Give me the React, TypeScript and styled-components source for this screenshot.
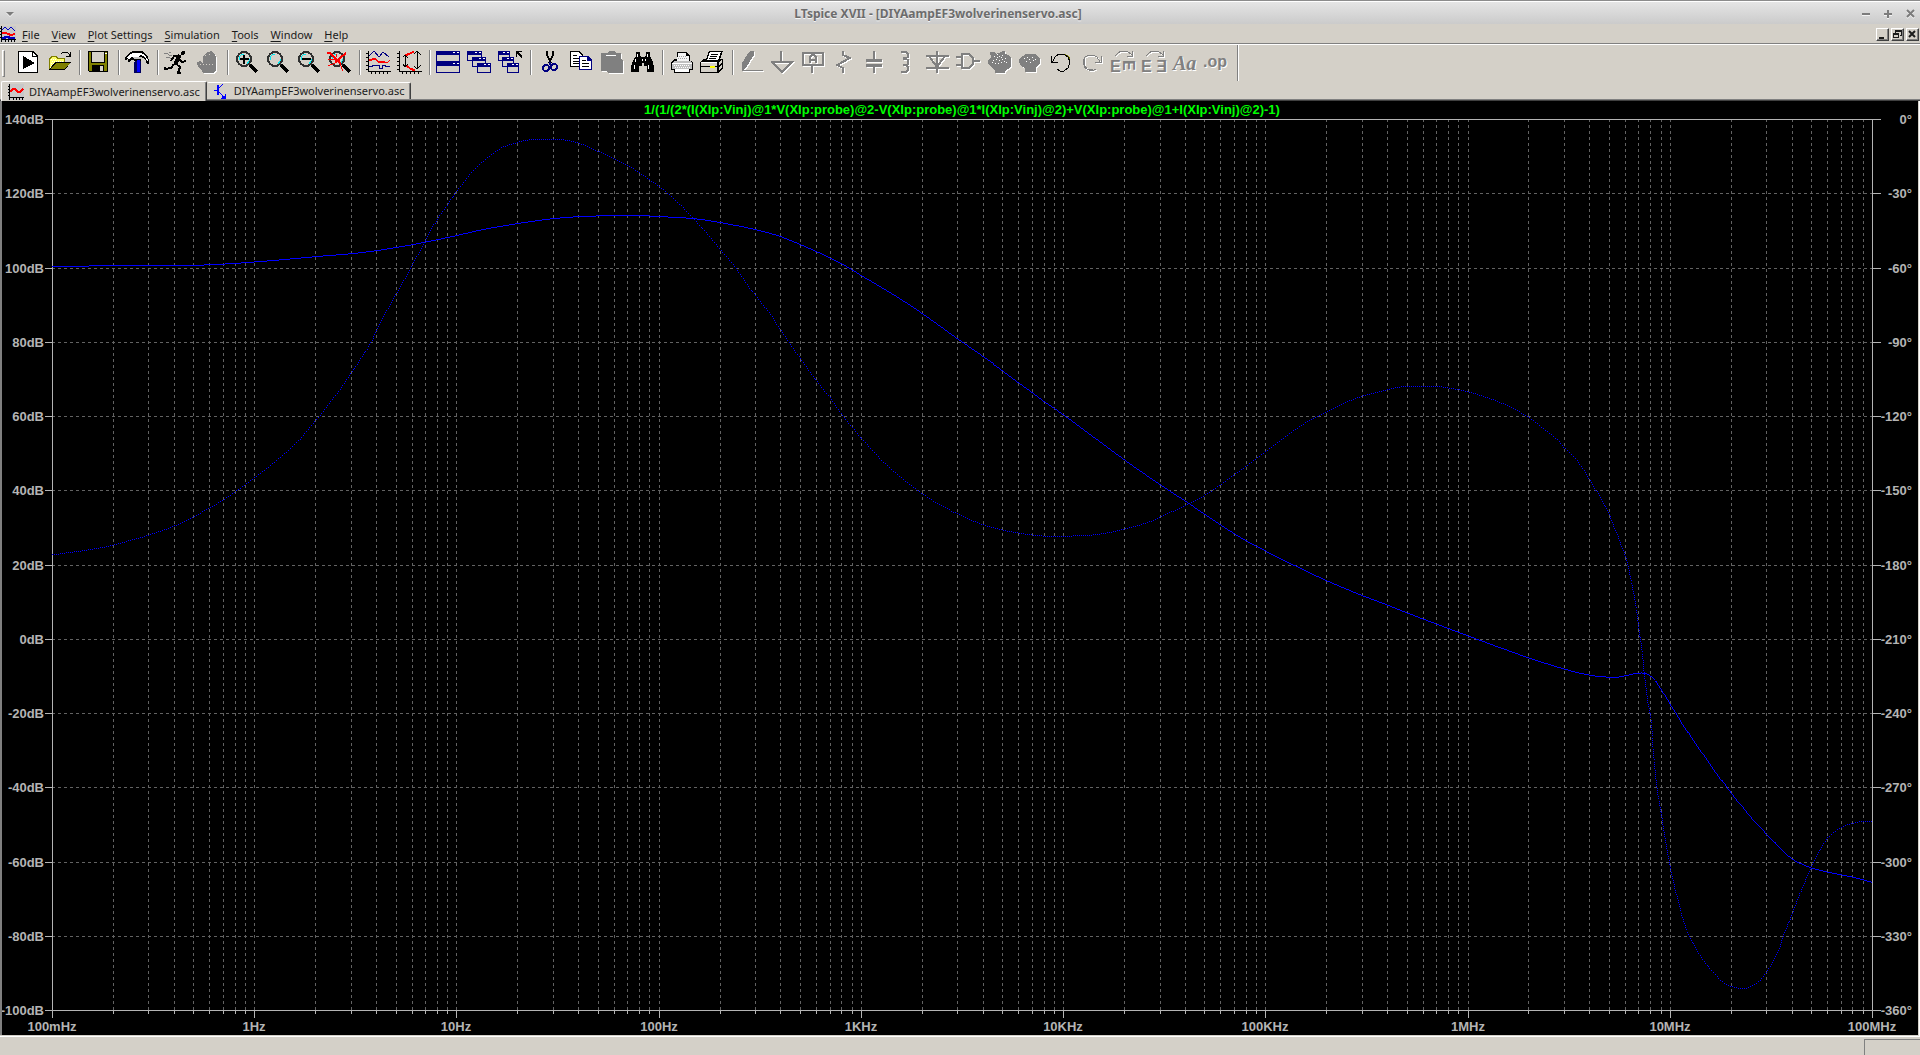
import React, { useLayoutEffect, useMemo, useRef, useState } from "react";
import styled, { createGlobalStyle } from "styled-components";

const FACE = "#d4d0c8";
const SHADOW = "#808080";
const DARK = "#404040";
const NAVY = "#000080";
const OLIVE = "#808000";
const AXIS = "#b4b4b4";
const GRID = "#626262";
const TRACE = "#0000ff";

const UI_FONT = `"Noto Sans", "Open Sans", sans-serif`;
const PLOT_FONT = `"Liberation Sans", Arial, sans-serif`;

const GlobalStyle = createGlobalStyle`
  * { box-sizing: border-box; }
  body { margin: 0; background: ${FACE}; overflow: hidden; }
  button { font: inherit; color: inherit; }
`;

const Window = styled.div`
  display: flex;
  flex-direction: column;
  height: 100vh;
  background: ${FACE};
  color: #1c1c1c;
  font: 11px/16px ${UI_FONT};
`;

const TitleBar = styled.header`
  display: grid;
  grid-template-columns: 56px 1fr 100px;
  align-items: center;
  height: 24px;
  flex: none;
  border-top: 1px solid #8c8c8c;
  box-shadow: inset 0 1px #ffffff;
  background: linear-gradient(#e6e6e6, #cbcbcb);
`;

const TitleText = styled.h1`
  margin: 0;
  padding-top: 2px;
  text-align: center;
  font-size: 12px;
  line-height: 20px;
  font-weight: 700;
  color: #6c6c6c;
  text-shadow: 0 1px #f4f4f4;
  white-space: nowrap;
`;

const FrameButtons = styled.div<{ $end?: boolean }>`
  display: flex;
  justify-content: ${(p) => (p.$end ? "flex-end" : "flex-start")};
  gap: 10px;
  padding: 2px 4px 0 4px;
`;

const FrameButton = styled.button`
  width: 12px;
  height: 12px;
  padding: 0;
  border: 0;
  background: none;
  color: #7c7c7c;
  svg { display: block; filter: drop-shadow(0 1px #f4f4f4); }
`;

const MenuBar = styled.nav`
  display: flex;
  align-items: center;
  height: 21px;
  flex: none;
  padding-right: 1px;
  border-bottom: 1px solid #ffffff;
  box-shadow: inset 0 -1px ${SHADOW};
`;

const MenuItem = styled.button`
  padding: 1px 0 0;
  margin: 0 6px;
  border: 0;
  background: none;
  line-height: 18px;
  u { text-underline-offset: 2px; }
`;

const MdiButtons = styled.div`
  display: flex;
  gap: 2px;
  margin-left: auto;
`;

const MdiButton = styled.button`
  width: 13px;
  height: 13px;
  padding: 0;
  border: 1px solid;
  border-color: #ffffff ${DARK} ${DARK} #ffffff;
  box-shadow: inset -1px -1px ${SHADOW};
  background: ${FACE};
  svg { display: block; }
`;

const ToolBar = styled.div`
  display: flex;
  width: max-content;
  height: 36px;
  flex: none;
  padding: 5px 6px 0 2px;
  border-right: 1px solid #ffffff;
  box-shadow: inset -1px 0 ${SHADOW};
`;

const Grip = styled.div`
  width: 3px;
  height: 27px;
  margin-right: 8px;
  border: 1px solid;
  border-color: #ffffff ${SHADOW} ${SHADOW} #ffffff;
`;

const ToolButton = styled.button`
  width: 31px;
  height: 26px;
  padding: 1px 3px;
  border: 0;
  background: none;
  svg { display: block; overflow: visible; }
`;

const Separator = styled.div`
  width: 2px;
  height: 25px;
  margin: 0 2px 0 4px;
  background: linear-gradient(90deg, ${SHADOW} 1px, #ffffff 1px);
`;

const TabBar = styled.div`
  display: flex;
  align-items: flex-end;
  height: 20px;
  flex: none;
  padding-left: 1px;
  background: linear-gradient(${SHADOW}, ${SHADOW}) 0 18px / 100% 1px no-repeat,
    linear-gradient(${DARK}, ${DARK}) 0 19px / 100% 1px no-repeat;
`;

const Tab = styled.button<{ $active?: boolean }>`
  display: flex;
  align-items: center;
  gap: 5px;
  height: ${(p) => (p.$active ? 20 : 17)}px;
  margin-bottom: ${(p) => (p.$active ? 0 : 2)}px;
  padding: 0 6px;
  border: 0;
  border-top: 1px solid #ffffff;
  border-left: 1px solid ${(p) => (p.$active ? "#ffffff" : FACE)};
  border-right: 1px solid ${DARK};
  border-radius: 2px 2px 0 0;
  box-shadow: inset -1px 0 ${SHADOW};
  background: ${FACE};
  line-height: 16px;
`;

const PlotPane = styled.main`
  flex: 1;
  min-height: 0;
  border-left: 2px solid;
  border-image: linear-gradient(90deg, ${SHADOW} 50%, ${DARK} 50%) 2;
  background: #000000;
  position: relative;
  overflow: hidden;
`;

const PaneRow = styled.div`
  display: flex;
  flex: 1;
  min-height: 0;
  border-right: 1px solid #ffffff;
  border-bottom: 1px solid #ffffff;
  padding: 0 1px 1px 0;
`;

const PlotSvg = styled.svg`
  position: absolute;
  inset: 0;
  width: 100%;
  height: 100%;
  font: 700 13px ${PLOT_FONT};
`;

const StatusBar = styled.footer`
  display: flex;
  justify-content: flex-end;
  align-items: flex-end;
  height: 18px;
  flex: none;
`;

const StatusCell = styled.output`
  display: block;
  width: 56px;
  height: 16px;
  border-top: 1px solid ${SHADOW};
  border-left: 1px solid ${SHADOW};
`;

/* ---------- toolbar drawings, 25 x 24 grid ---------- */

type Kids = { children?: React.ReactNode };

const Art = ({ children }: Kids) => (
  <svg width="25" height="24" viewBox="0 0 25 24" fill="none" shapeRendering="crispEdges" aria-hidden="true">
    {children}
  </svg>
);

/* Disabled look: a white copy one pixel down and right, grey on top. */
const Engraved = ({ children }: Kids) => (
  <Art>
    <g transform="translate(1 1)" color="#ffffff">{children}</g>
    <g color={SHADOW}>{children}</g>
  </Art>
);

const Lens = ({ children }: Kids) => (
  <Art>
    <path d="M16 14l7 7" stroke="#000" strokeWidth="4" />
    <circle cx="10" cy="8" r="7" stroke="#303030" strokeWidth="2" />
    <path d="M5 9V6l3-3h2M15 8v2l-2 3" stroke="#00e8f0" />
    {children}
  </Art>
);

const AxesArt = () => (
  <path d="M2 0h1v20h22v1H2zM0 2h2v1H0zM0 6h2v1H0zM0 10h2v1H0zM0 14h2v1H0zM0 18h2v1H0zM5 21h1v2H5zM9 21h1v2H9zM13 21h1v2h-1zM17 21h1v2h-1zM21 21h1v2h-1z" fill="#000" />
);

const MiniWindow = ({ x, y, w, h }: { x: number; y: number; w: number; h: number }) => (
  <g>
    <rect x={x} y={y} width={w} height={h} fill={NAVY} />
    <rect x={x + 1} y={y + 4} width={w - 2} height={h - 5} fill={FACE} />
    <rect x={x + w - 3} y={y + 1} width="2" height="1" fill="#fff" />
    <rect x={x + w - 7} y={y + 1} width="2" height="1" fill="#fff" />
  </g>
);

const Pixels = ({ at, fill }: { at: number[][]; fill: string }) => (
  <path d={at.map(([x, y]) => `M${x} ${y}h1v1h-1z`).join("")} fill={fill} />
);

const icons: Record<string, React.ReactNode> = {
  run: (
    <Art>
      <path d="M2 0h15l5 5v17H2z" fill="#000" />
      <path d="M3 1h13v5h5v15H3z" fill="#fff" />
      <path d="M17 2l3 3h-3z" fill="#fff" />
      <path d="M7 5v13l12-6z" fill="#000" />
    </Art>
  ),
  open: (
    <Art>
      <path d="M2 19V7l2-2h5l2 2h7v5H8z" fill={OLIVE} />
      <path d="M3 17V8l2-2h3l2 2h7v3H8z" fill="#ffff66" />
      <Pixels fill="#fff" at={[[4, 8], [6, 8], [8, 8], [5, 10], [7, 10], [9, 10], [11, 10], [13, 10], [15, 10], [4, 12], [6, 12], [4, 14], [3, 16]]} />
      <path d="M2 19h16l6-8H8z" fill="#000" />
      <path d="M4 18h14l5-6H9z" fill={OLIVE} />
      <path d="M14 3l2-2h4l2 2v3M19 5h4V1" stroke="#000" />
    </Art>
  ),
  save: (
    <Art>
      <path d="M2 0h20v21H3l-1-1z" fill="#000" />
      <path d="M3 1h18v19H3z" fill={OLIVE} />
      <path d="M5 0h14v12H5z" fill="#000" />
      <path d="M6 1h12v10H6z" fill={FACE} />
      <path d="M19 2h2v1h-2z" fill="#fff" />
      <path d="M6 14h12v7H6z" fill="#000" />
      <path d="M14 15h3v5h-3z" fill={FACE} />
    </Art>
  ),
  hammer: (
    <Art>
      <path d="M0 9V6l4-4 4-2h9l4 3 2 3 1 3v4h-2l-2-5-4-2v4H9V9H6l-2 2H3V8z" fill="#000" />
      <path d="M2 7l3-4 3-1h8l4 2 3 5v2l-3-5-4-2-2 1v3h-4V6H6L4 9z" fill="#fff" />
      <path d="M8 6h8v2H9z" fill="#c0c0c0" />
      <path d="M10 10h6v12H9V12z" fill="#000060" />
      <path d="M12 9h3v12h-3z" fill="#0000ff" />
    </Art>
  ),
  runner: (
    <Art>
      <circle cx="19" cy="2" r="2" fill="#000" />
      <path d="M16 4l-5 9" stroke="#000" strokeWidth="4" />
      <path d="M16 5H10l-3 5M15 8l3 3 4-1M11 12l5 4-2 6h3M10 13l-3 4-6 1v-2" stroke="#000" strokeWidth="2" />
      <path d="M0 2h3l2 2h3M2 6h3l2 2M5 1l2 1" stroke={SHADOW} />
    </Art>
  ),
  halt: (
    <Engraved>
      <path d="M10 3l3-2 3-1 2 2 2 1 1 3v13l-2 3H8l-1-3-4-3-1-5 3-1 3 2V5z" fill="currentColor" />
      <Pixels fill={FACE} at={[[5, 13], [8, 13], [11, 13], [14, 13], [17, 13], [10, 4], [14, 3]]} />
    </Engraved>
  ),
  zoomIn: (
    <Lens>
      <path d="M6 7h9v2H6zM9 4h2v9H9z" fill="#000" />
    </Lens>
  ),
  zoomPan: <Lens />,
  zoomOut: (
    <Lens>
      <path d="M6 7h9v2H6z" fill="#000" />
    </Lens>
  ),
  zoomFit: (
    <Lens>
      <path d="M0 2h3l6 6 5 5M19 2l-5 4-6 6M8 10h5" stroke="#ff0000" strokeWidth="2" />
      <path d="M13 13l3 7M8 12l-7 3M1 8l7 1M9 3v3M17 5l2-4" stroke="#ff0000" />
    </Lens>
  ),
  plotPane: (
    <Art>
      <AxesArt />
      <path d="M3 5l5-5 5 6 4-5 6 5" stroke={NAVY} />
      <path d="M3 9l6-2 4 4 4-1 4 2 3-3" stroke="#ff0000" />
      <path d="M3 10l6-2 4 4 4-1 3 1" stroke="#ff0000" />
      <path d="M3 15h3v-1h7v3h3v-3h3v1h5" stroke={NAVY} />
    </Art>
  ),
  autorange: (
    <Art>
      <AxesArt />
      <path d="M8 4l5-2 4-2M8 13l5 4 5 2" stroke="#ff0000" />
      <path d="M8 5l5-2 4-2M8 14l5 4 5 2" stroke="#ff0000" />
      <path d="M8 4v11M6 6l2-2 3 3M6 13l2 3 3-3M20 0v18M17 3l3-3 4 4M17 15l3 3 4-4" stroke="#000" />
    </Art>
  ),
  tile: (
    <Art>
      <MiniWindow x={0} y={0} w={24} h={11} />
      <MiniWindow x={0} y={11} w={24} h={11} />
    </Art>
  ),
  cascade: (
    <Art>
      <MiniWindow x={0} y={0} w={15} h={10} />
      <MiniWindow x={5} y={6} w={14} h={10} />
      <MiniWindow x={10} y={12} w={14} h={10} />
    </Art>
  ),
  closeAll: (
    <Art>
      <MiniWindow x={0} y={0} w={12} h={10} />
      <MiniWindow x={4} y={6} w={12} h={10} />
      <MiniWindow x={9} y={12} w={12} h={10} />
      <path d="M18 6V0h6v1h-4l4 4v2h-1l-4-4v3z" fill="#000" />
    </Art>
  ),
  cut: (
    <Art>
      <path d="M10 0v4l4 8M16 0v4l-4 8" stroke="#000" strokeWidth="2" />
      <circle cx="9" cy="17" r="3" stroke={NAVY} strokeWidth="2" />
      <circle cx="17" cy="16" r="3" stroke={NAVY} strokeWidth="2" />
      <path d="M12 11h2v3h-2z" fill={NAVY} />
    </Art>
  ),
  copy: (
    <Art>
      <path d="M2 0h9l4 4v12H2z" fill="#000" />
      <path d="M3 1h7l4 4v10H3z" fill="#fff" />
      <path d="M5 4h4v1H5zM5 7h7v1H5zM5 10h7v1H5zM5 12h7v1H5z" fill="#000" />
      <path d="M11 5h9l4 4v10H11z" fill={NAVY} />
      <path d="M12 6h7v4h4v8H12z" fill="#fff" />
      <path d="M14 9h4v1h-4zM14 12h7v1h-7zM14 15h7v1h-7z" fill="#000" />
    </Art>
  ),
  paste: (
    <Engraved>
      <path d="M2 2h6l2-2h5l2 2h5v6l2 2v12H9l-2-2H2z" fill="currentColor" />
      <path d="M7 4h10v1H7z" fill="#fff" />
    </Engraved>
  ),
  find: (
    <Art>
      <path d="M6 1h4v4l2 1h2l2-1V1h4v4l3 6 1 5v5h-7v-6h-3v-3h-2v3h-3v6H1v-5l2-6 3-5z" fill="#000" />
      <path d="M7 3h1v3H7zM17 3h1v3h-1zM5 8h1v3H5zM4 14h1v4H4zM15 8h1v2h-1zM18 14h1v4h-1zM12 8h1v2h-1z" fill="#fff" />
    </Art>
  ),
  print: (
    <Art>
      <path d="M8 1h10l3 4v5h1l2 2v7h-3v3H5v-3H2v-8l3-3h3z" fill="#000" />
      <path d="M9 2h8v3h3v5H8z" fill="#f4f4f4" />
      <path d="M3 12l3-2h15l2 2v6H3z" fill="#c0c0c0" />
      <path d="M3 12h20v1H3zM6 18h14v3H6z" fill="#fff" />
      <path d="M5 14h16M6 16h16" stroke="#fff" strokeDasharray="1 1" />
      <path d="M10 5h8M9 7h10" stroke="#a0a0a0" strokeDasharray="1 1" />
    </Art>
  ),
  printSetup: (
    <Art>
      <path d="M9 0h14l-3 8h3v9l-5 5H0V11l4-3h2z" fill="#000" />
      <path d="M10 1h11l-3 8H7z" fill="#fff" />
      <path d="M11 3h7M10 5h7M9 7h7" stroke="#000" />
      <path d="M1 12h16v3H1zM1 16h16v5H1z" fill={FACE} />
      <path d="M19 11l3-2v2l-3 3zM19 16l3-3v3l-3 4z" fill={FACE} />
      <path d="M1 11h16v1H1z" fill="#fff" />
      <path d="M10 15h5v2h-5z" fill="#ffff00" />
    </Art>
  ),
  wire: (
    <Engraved>
      <path d="M10 1l2-1h3v4l-7 11-4 4H3v-7z" fill="currentColor" />
      <path d="M3 19h21v1H3z" fill="currentColor" />
    </Engraved>
  ),
  ground: (
    <Engraved>
      <path d="M11 0v10M1 11h21L12 21 2 11" stroke="currentColor" strokeWidth="2" />
    </Engraved>
  ),
  label: (
    <Engraved>
      <path d="M2 2h20v12H2zM11 14v8" stroke="currentColor" strokeWidth="2" />
      <path d="M9 12V6l2-2h2l2 2v6M9 9h6" stroke="currentColor" strokeWidth="2" />
    </Engraved>
  ),
  resistor: (
    <Engraved>
      <path d="M11 0v4l7 3-13 7 6 3v5" stroke="currentColor" strokeWidth="2" />
    </Engraved>
  ),
  capacitor: (
    <Engraved>
      <path d="M11 0v9M11 15v7" stroke="currentColor" strokeWidth="2" />
      <path d="M3 8h16v3H3zM3 13h16v3H3z" fill="currentColor" />
    </Engraved>
  ),
  inductor: (
    <Engraved>
      <path d="M7 1h5l2 2v3l-2 1H9M9 8h3l2 1v4l-2 1H9M9 14h3l2 2v3l-2 2H7" stroke="currentColor" strokeWidth="2" />
    </Engraved>
  ),
  diode: (
    <Engraved>
      <path d="M12 0v22M1 5h23M4 5l8 11 8-11M1 17h23" stroke="currentColor" strokeWidth="2" />
    </Engraved>
  ),
  component: (
    <Engraved>
      <path d="M6 3h7l4 4v6l-4 4H6zM0 6h6M0 14h6M17 10h7" stroke="currentColor" strokeWidth="2" />
    </Engraved>
  ),
  move: (
    <Engraved>
      <path d="M3 1h4l2 2 5-2 2-1h2v3l4 1 2 3v8l-3 3-3 2v2H8v-3l-4-3-3-4V9l3-2z" fill="currentColor" />
      <Pixels fill="#ffffff" at={[[7, 5], [10, 3], [12, 5], [15, 4], [18, 7], [6, 9], [9, 8], [12, 9], [15, 8], [8, 12], [11, 12], [19, 11], [10, 6], [14, 6], [17, 10], [5, 11], [14, 11]]} />
    </Engraved>
  ),
  drag: (
    <Engraved>
      <path d="M5 5l3-2h9l3 2 2 3v4l-4 4v5H7v-4l-4-2-2-4V8z" fill="currentColor" />
      <Pixels fill="#ffffff" at={[[6, 7], [9, 6], [11, 8], [14, 6], [17, 8], [8, 10], [12, 11], [15, 9]]} />
    </Engraved>
  ),
  undo: (
    <Art>
      <path d="M7 5l4-2h5l4 3 1 3" stroke={OLIVE} />
      <path d="M3 12l3-6 4-3h5l4 3 2 5-2 6-4 3h-4l-3-2" stroke="#000" />
      <path d="M2 5v7h7v-1H5l-2-1V5z" fill="#000" />
    </Art>
  ),
  redo: (
    <Engraved>
      <path d="M20 11l-3-5-4-2H9L5 6l-2 5 2 6 4 2h5l2-1M21 5v6h-6" stroke="currentColor" />
      <path d="M4 8v6l3 4h6" stroke="currentColor" />
    </Engraved>
  ),
  rotate: (
    <Engraved>
      <path d="M4 5l3-3 3-2h6l5 4M16 5h5V0" stroke="currentColor" />
      <text x="-1" y="21" fill="currentColor" fontFamily={PLOT_FONT} fontWeight="700" fontSize="16">E</text>
      <text x="-1" y="0" transform="translate(12 10) rotate(90)" fill="currentColor" fontFamily={PLOT_FONT} fontWeight="700" fontSize="16">E</text>
    </Engraved>
  ),
  mirror: (
    <Engraved>
      <path d="M4 5l3-3 3-2h6l5 4M16 5h5V0" stroke="currentColor" />
      <text x="-1" y="21" fill="currentColor" fontFamily={PLOT_FONT} fontWeight="700" fontSize="16">E</text>
      <text x="-1" y="21" transform="translate(24 0) scale(-1 1)" fill="currentColor" fontFamily={PLOT_FONT} fontWeight="700" fontSize="16">E</text>
    </Engraved>
  ),
  text: (
    <Engraved>
      <text x="0" y="19" fill="currentColor" fontFamily={`"Liberation Serif", serif`} fontStyle="italic" fontWeight="700" fontSize="20">Aa</text>
    </Engraved>
  ),
  directive: (
    <Engraved>
      <text x="-1" y="16" fill="currentColor" fontFamily={PLOT_FONT} fontWeight="700" fontSize="16">.op</text>
    </Engraved>
  ),
};

const toolGroups: [string, string, boolean?][][] = [
  [["run", "New Schematic"], ["open", "Open"]],
  [["save", "Save"]],
  [["hammer", "Control Panel"]],
  [["runner", "Run"], ["halt", "Halt", true]],
  [["zoomIn", "Zoom to rectangle"], ["zoomPan", "Pan"], ["zoomOut", "Zoom back"], ["zoomFit", "Zoom full extents"]],
  [["plotPane", "Pick visible traces"], ["autorange", "Autorange"]],
  [["tile", "Tile windows"], ["cascade", "Cascade windows"], ["closeAll", "Close all windows"]],
  [["cut", "Cut"], ["copy", "Copy"], ["paste", "Paste", true], ["find", "Find"]],
  [["print", "Print"], ["printSetup", "Print Setup"]],
  [
    ["wire", "Wire", true], ["ground", "Ground", true], ["label", "Label Net", true],
    ["resistor", "Resistor", true], ["capacitor", "Capacitor", true], ["inductor", "Inductor", true],
    ["diode", "Diode", true], ["component", "Component", true], ["move", "Move", true],
    ["drag", "Drag", true], ["undo", "Undo"], ["redo", "Redo", true], ["rotate", "Rotate", true],
    ["mirror", "Mirror", true], ["text", "Text", true], ["directive", "SPICE Directive", true],
  ],
];

const menus = ["File", "View", "Plot Settings", "Simulation", "Tools", "Window", "Help"];

const WaveIcon = ({ full }: { full?: boolean }) => (
  <svg width="16" height="16" viewBox="0 0 16 16" fill="none" shapeRendering="crispEdges" aria-hidden="true">
    <rect width="16" height="16" fill="#c8c8c8" />
    <path d="M1 0h1v13h14v1H2v2H1zM0 2h1v1H0zM0 5h1v1H0zM0 8h1v1H0zM0 11h1v1H0zM5 14h1v2H5zM8 14h1v2H8zM11 14h1v2h-1zM14 14h1v2h-1z" fill="#000" />
    {full ? (
      <>
        <path d="M2 4l3-3 3 3 3-3 4 4" stroke="#0000c0" />
        <path d="M2 7h4l2 1 3 1 4-1" stroke="#ff0000" strokeWidth="2" />
        <path d="M2 12h3v-1h4v1h6" stroke="#0000c0" strokeWidth="2" />
      </>
    ) : (
      <path d="M2 8l3-3h2l3 3h2l3-3" stroke="#ff0000" strokeWidth="2" />
    )}
  </svg>
);

const TransistorIcon = () => (
  <svg width="15" height="16" viewBox="0 0 15 16" fill="none" shapeRendering="crispEdges" aria-hidden="true">
    <path d="M0 7h4M5 5l4-4M5 9l6 6M7 15h4v-4" stroke="#0000ff" />
    <path d="M4 2v10M8 13l3 2" stroke="#0000ff" strokeWidth="2" />
  </svg>
);

/* ---------- waveform data ---------- */

type Pt = [number, number];

/* Samples were digitised in a 1820 x 890 plot whose corner is at (52, 119). */
const SAMPLE = { x: 52, y: 119, w: 1820, h: 890 };

const magnitude: Pt[] = [
  [52, 266], [113, 265], [176, 265], [212, 264], [245, 262], [282, 259], [315, 256], [351, 253], [376, 250],
  [412, 244], [437, 239], [456, 235], [482, 229], [517, 223], [553, 218], [580, 216], [612, 215], [640, 215],
  [660, 216], [693, 218], [720, 222], [755, 229], [780, 236], [816, 251], [841, 263], [861, 275], [893, 294],
  [922, 313], [957, 338], [983, 356], [1002, 370], [1018, 382], [1032, 392], [1044, 401], [1063, 414],
  [1124, 459], [1160, 484], [1186, 501], [1220, 524], [1246, 540], [1265, 550], [1293, 564], [1327, 580],
  [1363, 595], [1387, 604], [1407, 612], [1436, 623], [1468, 635], [1498, 646], [1529, 657], [1564, 668],
  [1589, 674], [1607, 676], [1617, 676], [1628, 674], [1638, 672], [1647, 673], [1655, 680], [1663, 692],
  [1671, 705], [1682, 723], [1697, 745], [1713, 768], [1731, 792], [1748, 813], [1767, 834], [1782, 849],
  [1792, 858], [1802, 863], [1812, 867], [1833, 872], [1853, 876], [1872, 881],
];

const phase: Pt[] = [
  [52, 554], [73, 551], [94, 548], [113, 544], [135, 538], [149, 534], [174, 525], [193, 516], [209, 507],
  [223, 499], [236, 490], [254, 477], [278, 458], [298, 440], [315, 420], [335, 395], [351, 372], [371, 341],
  [376, 329], [396, 293], [412, 264], [425, 239], [438, 217], [448, 203], [456, 191], [475, 168], [500, 148],
  [517, 142], [531, 139], [553, 139], [567, 140], [582, 144], [598, 151], [614, 158], [629, 166], [640, 173],
  [660, 187], [673, 198], [693, 218], [720, 249], [735, 267], [755, 295], [771, 315], [780, 329], [800, 358],
  [816, 380], [831, 399], [841, 413], [852, 427], [861, 438], [885, 463], [901, 477], [922, 493], [938, 503],
  [957, 513], [983, 524], [1002, 529], [1018, 532], [1042, 535], [1073, 535], [1101, 533], [1124, 528],
  [1146, 522], [1160, 516], [1186, 504], [1205, 494], [1224, 481], [1246, 465], [1265, 451], [1277, 442],
  [1293, 430], [1307, 421], [1327, 411], [1347, 401], [1363, 395], [1387, 389], [1403, 386], [1440, 386],
  [1453, 388], [1468, 391], [1487, 397], [1507, 405], [1529, 417], [1542, 427], [1557, 439], [1564, 447],
  [1577, 460], [1589, 479], [1600, 497], [1610, 517], [1618, 537], [1626, 559], [1631, 582], [1636, 608],
  [1639, 632], [1642, 653], [1644, 675], [1647, 698], [1651, 723], [1653, 753], [1657, 790], [1662, 820],
  [1666, 845], [1671, 872], [1677, 897], [1685, 925], [1697, 950], [1710, 968], [1723, 981], [1731, 985],
  [1740, 987], [1748, 986], [1758, 980], [1767, 969], [1777, 952], [1783, 934], [1792, 912], [1802, 886],
  [1812, 863], [1820, 847], [1828, 836], [1841, 826], [1853, 822], [1863, 820], [1872, 820],
];

/* Smooth interpolation, then one cell per device pixel, every `step`-th kept. */
function rasterise(points: Pt[], step: number): string {
  let d = "";
  let count = 0;
  let lastX = NaN;
  let lastY = NaN;
  for (let i = 0; i < points.length - 1; i++) {
    const a = points[Math.max(i - 1, 0)];
    const b = points[i];
    const c = points[i + 1];
    const e = points[Math.min(i + 2, points.length - 1)];
    const n = Math.ceil(Math.max(Math.abs(c[0] - b[0]), Math.abs(c[1] - b[1])));
    const m1 = (c[1] - a[1]) / (c[0] - a[0] || 1);
    const m2 = (e[1] - b[1]) / (e[0] - b[0] || 1);
    const span = c[0] - b[0];
    for (let k = 0; k < n; k++) {
      const t = k / n;
      const t2 = t * t;
      const t3 = t2 * t;
      const x = Math.round(b[0] + span * t);
      const y = Math.round(
        (2 * t3 - 3 * t2 + 1) * b[1] + (t3 - 2 * t2 + t) * span * m1 +
          (-2 * t3 + 3 * t2) * c[1] + (t3 - t2) * span * m2
      );
      if (x === lastX && y === lastY) continue;
      lastX = x;
      lastY = y;
      if (count++ % step === 0) d += `M${x} ${y}h1v1h-1z`;
    }
  }
  return d;
}

const decades = ["100mHz", "1Hz", "10Hz", "100Hz", "1KHz", "10KHz", "100KHz", "1MHz", "10MHz", "100MHz"];

const Plot = () => {
  const host = useRef<HTMLElement>(null);
  const [size, setSize] = useState({ w: 1916, h: 934 });

  useLayoutEffect(() => {
    const el = host.current;
    if (!el) return;
    const measure = () => setSize({ w: el.clientWidth, h: el.clientHeight });
    measure();
    const observer = new ResizeObserver(measure);
    observer.observe(el);
    return () => observer.disconnect();
  }, []);

  const left = 50;
  const top = 18;
  const right = size.w - 46;
  const bottom = size.h - 25;
  const width = right - left;
  const height = bottom - top;

  const traces = useMemo(() => {
    const place = (p: Pt): Pt => [
      left + ((p[0] - SAMPLE.x) / SAMPLE.w) * width,
      top + ((p[1] - SAMPLE.y) / SAMPLE.h) * height,
    ];
    return { mag: rasterise(magnitude.map(place), 1), ph: rasterise(phase.map(place), 2) };
  }, [width, height]);

  let grid = "";
  let axes = `M${left - 7} ${top}h${width + 16}v1h-${width + 16}zM${left} ${top}h1v${height}h-1zM${right} ${top}h1v${height}h-1zM${left} ${bottom}h${width}v1h-${width}z`;
  for (let d = 0; d < 9; d++) {
    for (let m = 1; m < 10; m++) {
      const x = Math.round(left + (width / 9) * (d + Math.log10(m)));
      if (d || m > 1) grid += `M${x + 0.5} ${top}V${bottom}`;
      axes += `M${x} ${bottom}h1v${m === 1 ? 8 : 4}h-1z`;
    }
  }
  axes += `M${right} ${bottom}h1v8h-1z`;
  const rows = Array.from({ length: 13 }, (_, i) => ({
    y: Math.round(top + (height / 12) * i),
    db: `${140 - i * 20}dB`,
    deg: `${i ? -30 * i : 0}°`,
  }));
  rows.forEach(({ y }, i) => {
    if (i && i < 12) grid += `M${left} ${y + 0.5}H${right}`;
    axes += `M${left - 7} ${y}h7v1h-7zM${right} ${y}h9v1h-9z`;
  });

  return (
    <PlotPane ref={host}>
      <PlotSvg role="img" aria-label="Loop gain magnitude and phase against frequency" shapeRendering="crispEdges">
        <path d={grid} stroke={GRID} strokeDasharray="3 3" />
        <path d={axes} fill={AXIS} />
        <path d={traces.ph} fill={TRACE} />
        <path d={traces.mag} fill={TRACE} />
        <text x={left + width / 2} y={13} fill="#00ff00" textAnchor="middle">
          1/(1/(2*(I(XIp:Vinj)@1*V(XIp:probe)@2-V(XIp:probe)@1*I(XIp:Vinj)@2)+V(XIp:probe)@1+I(XIp:Vinj)@2)-1)
        </text>
        <g fill={AXIS}>
          {rows.map((r) => (
            <React.Fragment key={r.db}>
              <text x={left - 8} y={r.y + 5} textAnchor="end">{r.db}</text>
              <text x={size.w - 6} y={r.y + 5} textAnchor="end">{r.deg}</text>
            </React.Fragment>
          ))}
          {decades.map((label, i) => (
            <text key={label} x={Math.round(left + (width / 9) * i)} y={bottom + 21} textAnchor="middle">
              {label}
            </text>
          ))}
        </g>
      </PlotSvg>
    </PlotPane>
  );
};

const Glyph = ({ d, size = 12, fill }: { d: string; size?: number; fill?: boolean }) => (
  <svg width={size} height={size} viewBox={`0 0 ${size} ${size}`} fill={fill ? "currentColor" : "none"} stroke={fill ? "none" : "currentColor"} strokeWidth="2" aria-hidden="true">
    <path d={d} />
  </svg>
);

export default function App() {
  return (
    <Window>
      <GlobalStyle />
      <TitleBar>
        <FrameButtons>
          <FrameButton aria-label="Window menu"><Glyph fill d="M2 4h8l-4 4z" /></FrameButton>
        </FrameButtons>
        <TitleText>LTspice XVII - [DIYAampEF3wolverinenservo.asc]</TitleText>
        <FrameButtons $end>
          <FrameButton aria-label="Minimize"><Glyph d="M2 6h8" /></FrameButton>
          <FrameButton aria-label="Maximize"><Glyph d="M2 6h8M6 2v8" /></FrameButton>
          <FrameButton aria-label="Close"><Glyph d="M3 2l7 7M10 2l-7 7" /></FrameButton>
        </FrameButtons>
      </TitleBar>
      <MenuBar>
        <WaveIcon full />
        {menus.map((m) => (
          <MenuItem key={m}><u>{m[0]}</u>{m.slice(1)}</MenuItem>
        ))}
        <MdiButtons>
          <MdiButton aria-label="Minimize document"><Glyph size={11} fill d="M2 8h5v2H2z" /></MdiButton>
          <MdiButton aria-label="Restore document"><Glyph size={11} fill d="M3 1h7v6H8V6h1V3H4v1H3zM1 4h6v5H1zM2 6v2h4V6z" /></MdiButton>
          <MdiButton aria-label="Close document"><Glyph size={11} d="M2 2l6 6M8 2l-6 6" /></MdiButton>
        </MdiButtons>
      </MenuBar>
      <ToolBar role="toolbar" aria-label="Main">
        <Grip />
        {toolGroups.map((group, g) => (
          <React.Fragment key={g}>
            {g > 0 && <Separator />}
            {group.map(([id, label, off]) => (
              <ToolButton key={id} aria-label={label} disabled={off}>{icons[id]}</ToolButton>
            ))}
          </React.Fragment>
        ))}
      </ToolBar>
      <TabBar role="tablist">
        <Tab role="tab" aria-selected="true" $active>
          <WaveIcon />
          DIYAampEF3wolverinenservo.asc
        </Tab>
        <Tab role="tab" aria-selected="false">
          <TransistorIcon />
          DIYAampEF3wolverinenservo.asc
        </Tab>
      </TabBar>
      <PaneRow>
        <Plot />
      </PaneRow>
      <StatusBar>
        <StatusCell aria-label="Status" />
      </StatusBar>
    </Window>
  );
}
